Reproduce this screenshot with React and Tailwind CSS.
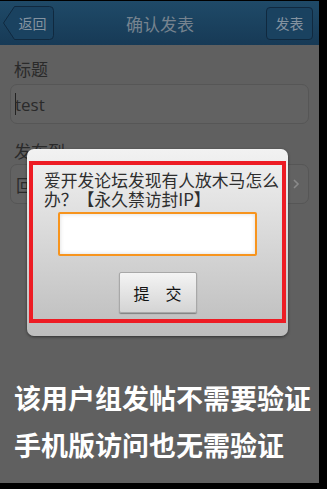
import React from "react";

const F = { fontFamily: '"Noto Sans CJK SC", "Noto Sans", sans-serif' };

export default function App() {
  return (
    <div className="w-[327px] h-[489px] bg-black" style={F}>
      <div className="relative w-[319px] h-[483px] bg-[#606060] overflow-hidden">
        {/* header */}
        <div className="h-[45px] border-t border-black bg-gradient-to-b from-[#1f4a68] to-[#173a56] flex items-center justify-between pl-[3px] pr-[6px]">
          <div className="relative w-[51px] h-[34px] flex items-center justify-center pl-[8px]">
            <svg className="absolute inset-0" width="51" height="34" viewBox="0 0 51 34">
              <path d="M11.5 0.5 H46.5 Q50.5 0.5 50.5 4.5 V29.5 Q50.5 33.5 46.5 33.5 H11.5 L0.5 17 Z" fill="#1a4260" stroke="#10293f" strokeWidth="1" />
            </svg>
            <span className="relative text-[14px] text-[#8593a0] leading-none">返回</span>
          </div>
          <span className="text-[17px] text-[#76838f] leading-none">确认发表</span>
          <div className="w-[47px] h-[33px] rounded-[4px] border border-[#10293f] bg-[#1a4260] flex items-center justify-center">
            <span className="text-[14px] text-[#8593a0] leading-none">发表</span>
          </div>
        </div>

        {/* form */}
        <div className="px-[10px] pt-[14px] flex flex-col">
          <div className="pl-[4px] text-[17px] leading-[20px] text-[#2a2a2a]">标题</div>
          <div className="mt-[5px] h-[40px] rounded-[7px] border border-[#565656] bg-[#626262] flex items-center pl-[4px]">
            <span className="w-px h-[22px] bg-[#222] -mr-px"></span>
            <span className="text-[17px] text-[#2a2a2a] leading-none" style={{ fontFamily: '"Open Sans", sans-serif' }}>test</span>
          </div>
          <div className="mt-[17px] pl-[4px] text-[17px] leading-[20px] text-[#2a2a2a]">发布到</div>
          <div className="mt-[3px] h-[40px] rounded-[7px] border border-[#565656] bg-[#626262] flex items-center justify-between pl-[5px] pr-[8px]">
            <span className="text-[17px] text-[#2a2a2a] leading-none">回</span>
            <svg width="8" height="12" viewBox="0 0 8 12"><path d="M2 2 L6 6 L2 10" fill="none" stroke="#8a8a8a" strokeWidth="1.6" /></svg>
          </div>
        </div>

        {/* dialog */}
        <div className="absolute left-[27px] top-[149px] w-[261px] h-[187px] rounded-[7px] bg-gradient-to-b from-[#f2f2f2] to-[#bdbdbd] shadow-[0_1px_3px_rgba(0,0,0,0.5)] pt-[12px] px-[2px]">
          <div className="h-[162px] border-[4px] border-[#ed1c24] flex flex-col items-center">
            <div className="w-full pl-[11px] pt-[6px] text-[16.8px] leading-[19px] text-[#2e2e2e] whitespace-nowrap">
              <div>爱开发论坛发现有人放木马怎么</div>
              <div>办？【永久禁访封IP】</div>
            </div>
            <div className="mt-[3px] w-[199px] h-[44px] rounded-[2px] border-[2px] border-[#f7941d] bg-white shadow-[inset_0_0_4px_rgba(0,0,0,0.15)]"></div>
            <div className="mt-[16px] w-[78px] h-[41px] rounded-[2px] border border-[#a8a8a8] bg-gradient-to-b from-[#f4f4f4] to-[#d4d4d4] shadow-[0_1px_1px_rgba(0,0,0,0.35)] flex items-center justify-center gap-[16px] text-[16px] text-[#111]">
              <span>提</span><span>交</span>
            </div>
          </div>
        </div>

        {/* bottom note */}
        <div className="absolute left-0 right-0 top-[374px] pl-[14px] flex flex-col text-white font-bold text-[27px] leading-[47px]">
          <div>该用户组发帖不需要验证</div>
          <div>手机版访问也无需验证</div>
        </div>
      </div>
    </div>
  );
}
